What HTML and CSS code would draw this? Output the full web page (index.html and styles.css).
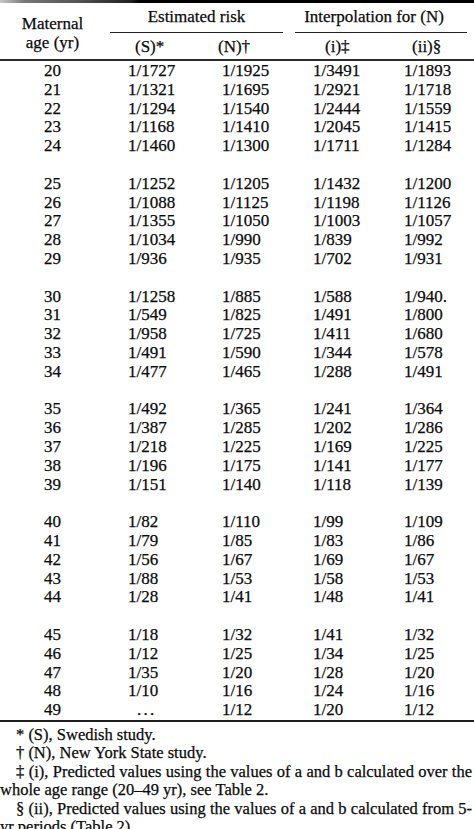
FILE: index.html
```html
<!DOCTYPE html>
<html lang="en">
<head>
<meta charset="utf-8">
<title>Maternal age risk table</title>
<link rel="stylesheet" href="styles.css">
</head>
<body>
<div class="page">
  <div class="rule-top"></div>
  <div class="head">
    <div class="maternal">Maternal<br>age (yr)</div>
    <div class="grp grp1">Estimated risk</div>
    <div class="grp grp2"><span class="grp2-text">Interpolation for (N)</span></div>
    <div class="sub sub-s">(S)*</div>
    <div class="sub sub-n">(N)†</div>
    <div class="sub sub-i">(i)‡</div>
    <div class="sub sub-ii">(ii)§</div>
  </div>
  <div class="rule-mid"></div>
  <div class="body">
    <div class="row"><span class="age">20</span><span class="v">1/1727</span><span class="v">1/1925</span><span class="v">1/3491</span><span class="v">1/1893</span></div>
    <div class="row"><span class="age">21</span><span class="v">1/1321</span><span class="v">1/1695</span><span class="v">1/2921</span><span class="v">1/1718</span></div>
    <div class="row"><span class="age">22</span><span class="v">1/1294</span><span class="v">1/1540</span><span class="v">1/2444</span><span class="v">1/1559</span></div>
    <div class="row"><span class="age">23</span><span class="v">1/1168</span><span class="v">1/1410</span><span class="v">1/2045</span><span class="v">1/1415</span></div>
    <div class="row"><span class="age">24</span><span class="v">1/1460</span><span class="v">1/1300</span><span class="v">1/1711</span><span class="v">1/1284</span></div>
    <div class="gap"></div>
    <div class="row"><span class="age">25</span><span class="v">1/1252</span><span class="v">1/1205</span><span class="v">1/1432</span><span class="v">1/1200</span></div>
    <div class="row"><span class="age">26</span><span class="v">1/1088</span><span class="v">1/1125</span><span class="v">1/1198</span><span class="v">1/1126</span></div>
    <div class="row"><span class="age">27</span><span class="v">1/1355</span><span class="v">1/1050</span><span class="v">1/1003</span><span class="v">1/1057</span></div>
    <div class="row"><span class="age">28</span><span class="v">1/1034</span><span class="v">1/990</span><span class="v">1/839</span><span class="v">1/992</span></div>
    <div class="row"><span class="age">29</span><span class="v">1/936</span><span class="v">1/935</span><span class="v">1/702</span><span class="v">1/931</span></div>
    <div class="gap"></div>
    <div class="row"><span class="age">30</span><span class="v">1/1258</span><span class="v">1/885</span><span class="v">1/588</span><span class="v">1/940.</span></div>
    <div class="row"><span class="age">31</span><span class="v">1/549</span><span class="v">1/825</span><span class="v">1/491</span><span class="v">1/800</span></div>
    <div class="row"><span class="age">32</span><span class="v">1/958</span><span class="v">1/725</span><span class="v">1/411</span><span class="v">1/680</span></div>
    <div class="row"><span class="age">33</span><span class="v">1/491</span><span class="v">1/590</span><span class="v">1/344</span><span class="v">1/578</span></div>
    <div class="row"><span class="age">34</span><span class="v">1/477</span><span class="v">1/465</span><span class="v">1/288</span><span class="v">1/491</span></div>
    <div class="gap"></div>
    <div class="row"><span class="age">35</span><span class="v">1/492</span><span class="v">1/365</span><span class="v">1/241</span><span class="v">1/364</span></div>
    <div class="row"><span class="age">36</span><span class="v">1/387</span><span class="v">1/285</span><span class="v">1/202</span><span class="v">1/286</span></div>
    <div class="row"><span class="age">37</span><span class="v">1/218</span><span class="v">1/225</span><span class="v">1/169</span><span class="v">1/225</span></div>
    <div class="row"><span class="age">38</span><span class="v">1/196</span><span class="v">1/175</span><span class="v">1/141</span><span class="v">1/177</span></div>
    <div class="row"><span class="age">39</span><span class="v">1/151</span><span class="v">1/140</span><span class="v">1/118</span><span class="v">1/139</span></div>
    <div class="gap"></div>
    <div class="row"><span class="age">40</span><span class="v">1/82</span><span class="v">1/110</span><span class="v">1/99</span><span class="v">1/109</span></div>
    <div class="row"><span class="age">41</span><span class="v">1/79</span><span class="v">1/85</span><span class="v">1/83</span><span class="v">1/86</span></div>
    <div class="row"><span class="age">42</span><span class="v">1/56</span><span class="v">1/67</span><span class="v">1/69</span><span class="v">1/67</span></div>
    <div class="row"><span class="age">43</span><span class="v">1/88</span><span class="v">1/53</span><span class="v">1/58</span><span class="v">1/53</span></div>
    <div class="row"><span class="age">44</span><span class="v">1/28</span><span class="v">1/41</span><span class="v">1/48</span><span class="v">1/41</span></div>
    <div class="gap"></div>
    <div class="row"><span class="age">45</span><span class="v">1/18</span><span class="v">1/32</span><span class="v">1/41</span><span class="v">1/32</span></div>
    <div class="row"><span class="age">46</span><span class="v">1/12</span><span class="v">1/25</span><span class="v">1/34</span><span class="v">1/25</span></div>
    <div class="row"><span class="age">47</span><span class="v">1/35</span><span class="v">1/20</span><span class="v">1/28</span><span class="v">1/20</span></div>
    <div class="row"><span class="age">48</span><span class="v">1/10</span><span class="v">1/16</span><span class="v">1/24</span><span class="v">1/16</span></div>
    <div class="row"><span class="age">49</span><span class="v dots">. . .</span><span class="v">1/12</span><span class="v">1/20</span><span class="v">1/12</span></div>
  </div>
  <div class="rule-bottom"></div>
  <div class="notes">
    <p class="note">* (S), Swedish study.</p>
    <p class="note">† (N), New York State study.</p>
    <p class="note"><span class="ln full">‡ (i), Predicted values using the values of a and b calculated over the</span><span class="ln cont">whole age range (20–49 yr), see Table 2.</span></p>
    <p class="note"><span class="ln full">§ (ii), Predicted values using the values of a and b calculated from 5-</span><span class="ln cont">yr periods (Table 2).</span></p>
  </div>
</div>
</body>
</html>
```
FILE: styles.css
```css
html, body {
  margin: 0;
  padding: 0;
  background: #ffffff;
}

.page {
  width: 474px;
  font-family: "Liberation Serif", "Times New Roman", serif;
  font-size: 17px;
  color: #0a0a0a;
  -webkit-text-stroke: 0.25px #0a0a0a;
}

.rule-top {
  height: 3px;
  background: linear-gradient(to right, #c8c8c8 0, #777 25px, #555 75px, #222 130px, #000 140px);
}

.head {
  display: grid;
  grid-template-columns: 105px 94px 91px 91px 93px;
  grid-template-rows: auto auto;
  line-height: 19px;
}

.maternal {
  grid-column: 1;
  grid-row: 1 / 3;
  text-align: center;
  padding-top: 11px;
}

.grp {
  grid-row: 1;
  padding-top: 4px;
  padding-bottom: 6px;
  border-bottom: 1px solid #222;
  text-align: center;
}

.grp1 {
  grid-column: 2 / 4;
  margin-left: 5px;
  margin-right: 7px;
}

.grp2 {
  grid-column: 4 / 6;
  margin-left: 5px;
  margin-right: 7px;
  padding-right: 14px;
}

.sub {
  grid-row: 2;
  padding-top: 4px;
  padding-bottom: 3px;
}

.sub-s { grid-column: 2; padding-left: 30px; }
.sub-n { grid-column: 3; padding-left: 19px; }
.sub-i { grid-column: 4; padding-left: 35px; }
.sub-ii { grid-column: 5; padding-left: 31px; }

.rule-mid {
  height: 2px;
  background: #2a2a2a;
}

.body {
  padding-top: 1px;
}

.row {
  display: grid;
  grid-template-columns: 105px 94px 91px 91px 93px;
  line-height: 18.8px;
  height: 18.8px;
}

.gap {
  height: 18.8px;
}

.age {
  text-align: center;
}

.v {
  padding-left: 23px;
  white-space: nowrap;
}

.dots {
  padding-left: 32px;
  letter-spacing: -1px;
}

.rule-bottom {
  height: 2px;
  background: #1e1e1e;
}

.notes {
  padding-top: 4px;
  width: 472px;
  font-size: 16.5px;
  line-height: 18.5px;
}

.note {
  margin: 0;
  text-indent: 16px;
}

.ln {
  display: block;
}

.full {
  text-align: justify;
  text-align-last: justify;
}

.cont {
  text-indent: 0;
}
```
